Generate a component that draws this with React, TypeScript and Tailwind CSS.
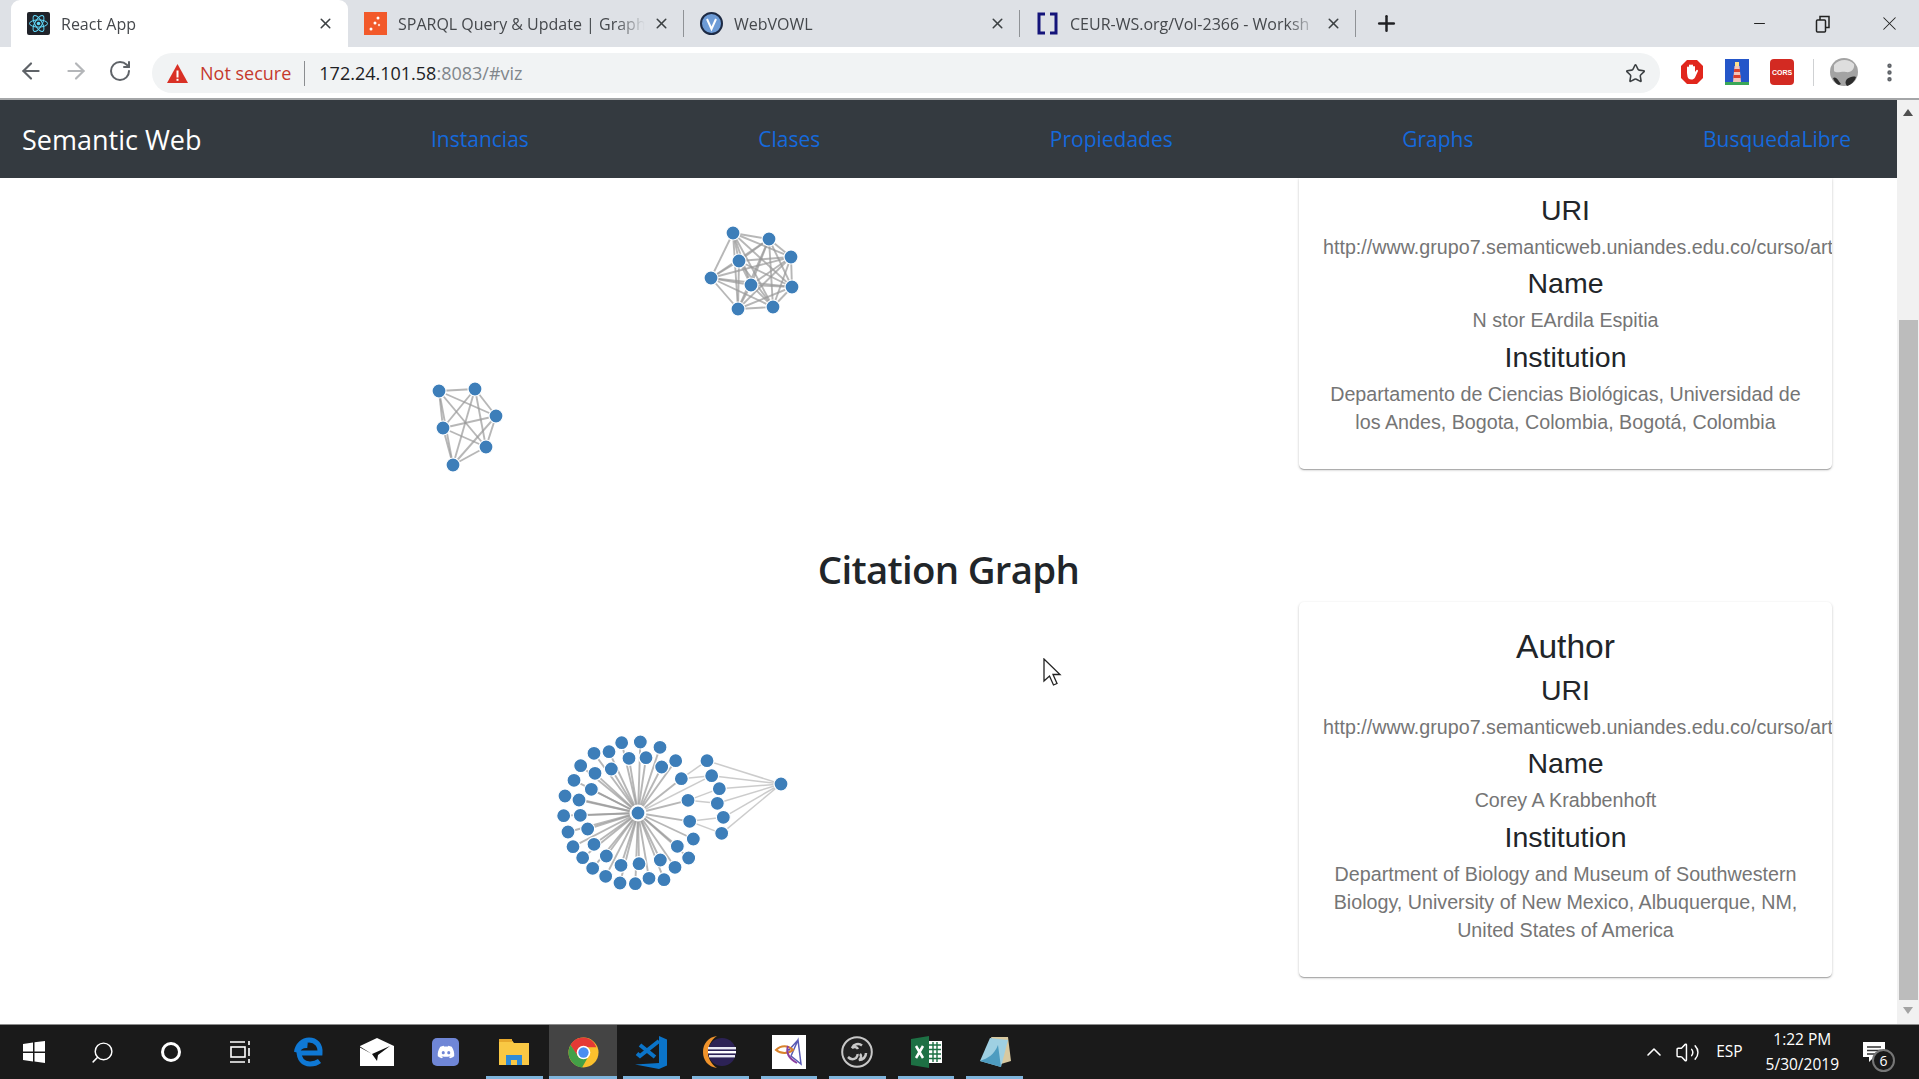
import React from 'react';
import { ArrowLeft, ArrowRight, RotateCw, Star, X, Plus, Minus, MoreVertical, ChevronUp, Volume2, Search } from 'lucide-react';
import { FaDiscord } from 'react-icons/fa';

type Point = [number, number];

// graph coordinates are in page pixels, the viewBox of each svg picks the slice it shows
const toPage = (pts: Point[], ox: number, oy: number): Point[] => pts.map(([x, y]) => [ox + x / 3, oy + y / 3]);

const clusterA: Point[] = [[733, 233], [769, 239], [791, 257], [739, 261], [711, 278], [751, 285], [792, 287], [738, 309], [773, 307]];
const clusterB: Point[] = [[439, 391], [475, 389], [496, 416], [443, 428], [486, 447], [453, 465]];

const citationCenter: Point = [638, 813];
const citationHub: Point = [781, 784];
const citationNodes = toPage(
  [
    [245, 68], [301, 66], [360, 82], [207, 95], [162, 100], [267, 115], [318, 113], [407, 122], [122, 137], [365, 141],
    [214, 147], [165, 160], [424, 176], [102, 181], [154, 208], [75, 228], [117, 240], [71, 287], [121, 286], [143, 327],
    [84, 336], [162, 373], [99, 380], [199, 408], [128, 413], [158, 445], [243, 436], [297, 431], [361, 420], [405, 442],
    [446, 414], [412, 379], [460, 357], [197, 469], [240, 489], [286, 491], [327, 475], [372, 479], [444, 241], [449, 304],
  ],
  540,
  720,
);
const citationRight = toPage([[501, 122], [515, 167], [538, 206], [532, 250], [550, 292], [545, 340]], 540, 720);
const rightLinks: [number, Point][] = toPage([[424, 176], [424, 176], [444, 241], [444, 241], [449, 304], [449, 304]], 540, 720).map((p, i) => [i, p]);

const Link = ({ a, b, light }: { a: Point; b: Point; light?: boolean }) => (
  <line x1={a[0]} y1={a[1]} x2={b[0]} y2={b[1]} stroke="#999" strokeOpacity={light ? 0.5 : 0.7} strokeWidth={light ? 1.5 : 1.9} />
);

const Node = ({ p, r = 7 }: { p: Point; r?: number }) => (
  <circle cx={p[0]} cy={p[1]} r={r} fill="#3d7eb9" stroke="#fff" strokeWidth={1.2} />
);

const Cluster = ({ nodes }: { nodes: Point[] }) => (
  <g>
    {nodes.map((a, i) => nodes.slice(i + 1).map((b, j) => <Link key={`${i}-${j}`} a={a} b={b} />))}
    {nodes.map((p, i) => <Node key={i} p={p} />)}
  </g>
);

const CitationGraph = () => (
  <g>
    {citationNodes.map((p, i) => <Link key={i} a={citationCenter} b={p} />)}
    {citationRight.map((p, i) => <Link key={i} a={citationHub} b={p} light />)}
    {rightLinks.map(([i, p]) => <Link key={i} a={citationRight[i]} b={p} light />)}
    {citationRight.slice(1, 2).map((p, i) => <Link key={i} a={citationCenter} b={p} light />)}
    <circle cx={citationCenter[0]} cy={citationCenter[1]} r={8.5} fill="#fff" />
    {citationNodes.map((p, i) => <Node key={i} p={p} />)}
    {citationRight.map((p, i) => <Node key={i} p={p} />)}
    <Node p={citationCenter} />
    <Node p={citationHub} />
  </g>
);

const Field = ({ label, children, nowrap }: { label: string; children: React.ReactNode; nowrap?: boolean }) => (
  <div>
    <h4 className="text-[28.5px] leading-[34px] mb-[6px] text-center text-[#212529]">{label}</h4>
    <p className={`text-[19.7px] leading-[28px] mb-[5.33px] text-[#757575] ${nowrap ? 'whitespace-nowrap text-left' : 'text-center'}`}>
      {children}
    </p>
  </div>
);

const AuthorCard = ({ name, institution, title, top }: { name: string; institution: string; title?: boolean; top?: boolean }) => (
  <div
    className={`w-[533px] overflow-hidden bg-white px-6 pb-[28px] shadow-[0_1px_3px_rgba(0,0,0,0.2),0_1px_1px_rgba(0,0,0,0.14),0_2px_1px_-1px_rgba(0,0,0,0.12)] ${
      top ? 'rounded-b-[5px] pt-[15px]' : 'rounded-[5px] pt-[25px]'
    }`}
  >
    {title && <h3 className="text-[33.6px] leading-[40px] mb-[6px] text-center text-[#212529]">Author</h3>}
    <Field label="URI" nowrap>http://www.grupo7.semanticweb.uniandes.edu.co/curso/art</Field>
    <Field label="Name">{name}</Field>
    <Field label="Institution">{institution}</Field>
  </div>
);

const ReactIcon = () => (
  <svg width="23" height="23" viewBox="0 0 23 23">
    <rect width="23" height="23" rx="2" fill="#20232a" />
    <g fill="none" stroke="#61dafb" strokeWidth="1">
      <ellipse cx="11.5" cy="11.5" rx="9" ry="3.6" />
      <ellipse cx="11.5" cy="11.5" rx="9" ry="3.6" transform="rotate(60 11.5 11.5)" />
      <ellipse cx="11.5" cy="11.5" rx="9" ry="3.6" transform="rotate(120 11.5 11.5)" />
    </g>
    <circle cx="11.5" cy="11.5" r="1.8" fill="#61dafb" />
  </svg>
);

const SparqlIcon = () => (
  <svg width="23" height="23" viewBox="0 0 23 23">
    <rect width="23" height="23" fill="#f2592a" />
    <circle cx="14" cy="6" r="1.5" fill="#fff" />
    <circle cx="11" cy="11" r="1.5" fill="#fff" />
    <circle cx="15" cy="13" r="1.2" fill="#ffd3c4" />
    <circle cx="7" cy="17" r="1.5" fill="#fff" />
  </svg>
);

const VowlIcon = () => (
  <svg width="23" height="23" viewBox="0 0 23 23">
    <circle cx="11.5" cy="11.5" r="10.5" fill="#6d9bd6" stroke="#1d2a44" strokeWidth="2" />
    <path d="M7 7l4.5 10L16 7" fill="none" stroke="#fff" strokeWidth="2" />
  </svg>
);

const CeurIcon = () => (
  <svg width="21" height="23" viewBox="0 0 21 23">
    <path d="M8 2H2v19h6M13 2h6v19h-6" fill="none" stroke="#14147a" strokeWidth="3" />
  </svg>
);

const Tab = ({ icon, title, active, last }: { icon: React.ReactNode; title: string; active?: boolean; last?: boolean }) => (
  <div className={`relative flex h-full items-center pl-[16px] pr-[14px] ${active ? 'ml-[4px] w-[337px] rounded-t-[9px] bg-white' : 'w-[336px]'}`}>
    <span className="flex w-[23px] shrink-0 justify-center">{icon}</span>
    <span className="ml-[11px] flex-1 overflow-hidden whitespace-nowrap text-[16px] text-[#45484c] [mask-image:linear-gradient(to_right,black_88%,transparent)]">
      {title}
    </span>
    <X size={17} strokeWidth={2.2} className="ml-2 shrink-0 text-[#3c4043]" />
    {(!active || last) && <span className="absolute right-0 top-[10px] h-[27px] w-px bg-[#8f9296]" />}
  </div>
);

const TabStrip = () => (
  <div className="flex h-[47px] shrink-0 items-end bg-[#dee1e6] pl-[7px]">
    <Tab active icon={<ReactIcon />} title="React App" />
    <Tab icon={<SparqlIcon />} title="SPARQL Query & Update | Graph" />
    <Tab icon={<VowlIcon />} title="WebVOWL" />
    <Tab last icon={<CeurIcon />} title="CEUR-WS.org/Vol-2366 - Worksh" />
    <Plus size={25} strokeWidth={2.4} className="mb-[11px] ml-[18px] text-[#202124]" />
    <div className="mb-[12px] ml-auto flex items-center gap-[47px] pr-[18px] text-[#222]">
      <Minus size={17} strokeWidth={1.6} />
      <svg width="16" height="18" viewBox="0 0 16 18" fill="none" stroke="#222" strokeWidth="1.5">
        <rect x="1.5" y="5" width="9" height="12" rx="1" />
        <path d="M5 5V1.5h9v11h-3.5" />
      </svg>
      <X size={23} strokeWidth={1.1} />
    </div>
  </div>
);

const StopIcon = () => (
  <svg width="24" height="26" viewBox="0 0 24 26">
    <path d="M7 1h10l6 6v12l-6 6H7l-6-6V7z" fill="#e1261c" />
    <path d="M7 14V8.500a1 1 0 0 1 2 0V6.500a1 1 0 0 1 2 0a1 1 0 0 1 2 0V8a1 1 0 0 1 2 0v5l1.500-2a1 1 0 0 1 1.500 1l-3 6.500c-1 1.500-2 2-3.500 2c-2.500 0-3.500-1-4-3z" fill="#fff" />
  </svg>
);

const LighthouseIcon = () => (
  <svg width="24" height="26" viewBox="0 0 24 26">
    <rect width="24" height="26" fill="#2456c9" />
    <rect y="23" width="24" height="3" fill="#3aa757" />
    <path d="M9.500 7h5l1.500 16H8z" fill="#f3c5ba" />
    <path d="M9.200 10h5.600l.3 3H8.900zM8.600 16h6.800l.3 3H8.300z" fill="#d9402e" />
    <rect x="10" y="3" width="4" height="4" fill="#ffe08a" />
  </svg>
);

const CorsIcon = () => (
  <svg width="24" height="26" viewBox="0 0 24 26">
    <rect width="24" height="26" rx="4" fill="#d32a22" />
    <text x="12" y="16" textAnchor="middle" fontFamily="Liberation Sans" fontSize="7" fontWeight="700" fill="#fff">
      CORS
    </text>
  </svg>
);

const Avatar = () => (
  <svg width="28" height="30" viewBox="0 0 28 30">
    <circle cx="14" cy="15" r="14" fill="#a3a3a3" />
    <path d="M4 8c5-6 14-7 20-1 1 5-3 9-8 8s-9 2-12-1z" fill="#dedede" />
    <path d="M3 21c3-2 5 2 8 6l-2 1c-3-1-5-4-6-7zM17 22c3-2 6-3 9-2-1 4-5 8-9 9-2-2-2-5 0-7z" fill="#2c2c2c" />
  </svg>
);

const Toolbar = () => (
  <div className="flex h-[53px] shrink-0 items-start border-b-2 border-[#a4a6a8] bg-white">
    <div className="mt-[11px] flex w-[152px] items-center pl-[18px] gap-[19px]">
      <ArrowLeft size={26} strokeWidth={2} className="text-[#5f6368]" />
      <ArrowRight size={26} strokeWidth={2} className="text-[#b4b6b9]" />
      <RotateCw size={24} strokeWidth={2} className="text-[#5f6368]" />
    </div>
    <div className="mt-[6px] flex h-[40px] w-[1508px] items-center rounded-full bg-[#f1f3f4] pl-[15px] pr-[14px]">
      <svg width="21" height="19" viewBox="0 0 21 19">
        <path d="M10.500 0L21 19H0z" fill="#d93025" />
        <rect x="9.500" y="6.500" width="2" height="7" fill="#fff" />
        <rect x="9.500" y="14.800" width="2" height="2" fill="#fff" />
      </svg>
      <span className="ml-[12px] text-[18px] text-[#c5392d]">Not secure</span>
      <span className="ml-[13px] h-[25px] w-px bg-[#8b8d90]" />
      <span className="ml-[14px] text-[18px] text-[#202124]">
        172.24.101.58<span className="text-[#80868b]">:8083/#viz</span>
      </span>
      <Star size={21} strokeWidth={1.8} className="ml-auto text-[#3c4043]" />
    </div>
    <div className="mt-[10px] flex flex-1 items-center pl-[20px]">
      <StopIcon />
      <span className="ml-[21px]"><LighthouseIcon /></span>
      <span className="ml-[21px]"><CorsIcon /></span>
      <span className="ml-[19px] h-[27px] w-px bg-[#cfd1d3]" />
      <span className="ml-[16px]"><Avatar /></span>
      <MoreVertical size={23} strokeWidth={2.6} className="ml-[20px] text-[#5f6368]" />
    </div>
  </div>
);

const Navbar = () => (
  <nav className="flex h-[78px] shrink-0 items-center justify-between bg-[#343a40] pt-[2px] pl-[22px] pr-[46px] font-['Open_Sans',sans-serif]">
    <span className="text-[27px] text-white">Semantic Web</span>
    {['Instancias', 'Clases', 'Propiedades', 'Graphs', 'BusquedaLibre'].map(item => (
      <a key={item} className="text-[21px] text-[#1569dc]">{item}</a>
    ))}
  </nav>
);

const Scrollbar = () => (
  <div className="flex w-[22px] shrink-0 flex-col items-center bg-[#f1f1f1]">
    <span className="mt-[9px] h-0 w-0 border-x-[5px] border-b-[7px] border-x-transparent border-b-[#505050]" />
    <div className="mt-[204px] h-[680px] w-[19px] bg-[#bcbcbc]" />
    <span className="mt-[7px] h-0 w-0 border-x-[5px] border-t-[7px] border-x-transparent border-t-[#a3a3a3]" />
  </div>
);

const Cursor = () => (
  <svg className="absolute left-[1043px] top-[658px]" width="19" height="28" viewBox="0 0 19 28">
    <path d="M1 1v22l5.500-5 4 9 3.500-1.500-4-9H17z" fill="#fff" stroke="#222" strokeWidth="1.3" />
  </svg>
);

const ChromeIcon = () => (
  <svg width="31" height="31" viewBox="0 0 32 32">
    <circle cx="16" cy="16" r="15.500" fill="#fbc02d" />
    <path d="M16 .5A15.500 15.500 0 0 0 2.600 8.200L9 19l7-8.500h13.400A15.500 15.500 0 0 0 16 .5z" fill="#e53935" />
    <path d="M2.600 8.200A15.500 15.500 0 0 0 14.500 31.400L20 22l-9-1z" fill="#43a047" />
    <circle cx="16" cy="16" r="7" fill="#fff" />
    <circle cx="16" cy="16" r="5.300" fill="#4a8df0" />
  </svg>
);

const TaskIcons: { key: string; icon: React.ReactNode; open?: boolean; active?: boolean }[] = [
  {
    key: 'start',
    icon: (
      <svg width="24" height="24" viewBox="0 0 24 24" fill="#fff">
        <path d="M1 4l10-1.500V11.500H1zM12.500 2.300L23 1v10.500H12.500zM1 13h10v8.500L1 20zM12.500 13H23v10l-10.500-1.500z" />
      </svg>
    ),
  },
  { key: 'search', icon: <Search size={25} strokeWidth={1.4} className="-scale-x-100 text-white" /> },
  { key: 'cortana', icon: <span className="h-[20px] w-[20px] rounded-full border-[3px] border-white" /> },
  {
    key: 'taskview',
    icon: (
      <svg width="24" height="26" viewBox="0 0 24 26" fill="none" stroke="#fff" strokeWidth="1.6">
        <rect x="3" y="8" width="14" height="10" />
        <path d="M2 3h15M2 23h15M21 2v4M21 9v8M21 20v4" />
      </svg>
    ),
  },
  {
    key: 'edge',
    icon: (
      <svg width="30" height="32" viewBox="0 0 30 32" fill="none">
        <path d="M4 17h22c.5-8-4-13-11-13C9 4 3.500 9 2.500 16c2-4 6-7 11-6.500" stroke="#0f78d4" strokeWidth="5" />
        <path d="M5 15c0 8 4 13 11 13 4 0 7-1 9.500-3" stroke="#0f78d4" strokeWidth="5" />
      </svg>
    ),
  },
  {
    key: 'mail',
    icon: (
      <svg width="34" height="28" viewBox="0 0 34 28">
        <path d="M0 8L17 0l17 8v20H0z" fill="#fff" />
        <path d="M0 8.500l12 7.500 18-8-12 9-1 6-5-7L0 9.500z" fill="#111" />
      </svg>
    ),
  },
  {
    key: 'discord',
    icon: (
      <span className="flex h-[28px] w-[27px] items-center justify-center rounded-[5px] bg-[#6f86d6]">
        <FaDiscord size={18} className="text-white" />
      </span>
    ),
  },
  {
    key: 'explorer',
    open: true,
    icon: (
      <svg width="32" height="28" viewBox="0 0 32 28">
        <path d="M1 1h12l3 4h15v22H1z" fill="#f9c844" />
        <rect x="1" y="1" width="13" height="3" fill="#e8a92c" />
        <path d="M8 27V17h16v10h-5v-5h-6v5z" fill="#2e8bd8" />
      </svg>
    ),
  },
  { key: 'chrome', open: true, active: true, icon: <ChromeIcon /> },
  {
    key: 'vscode',
    open: true,
    icon: (
      <svg width="35" height="35" viewBox="0 0 35 35" fill="none">
        <path d="M25 1l8 3.500v26L25 34 1 29.500 25 28z" fill="#0b74c9" />
        <path d="M25 6L6 21l-3-2.500M6 10l15 12" stroke="#0b74c9" strokeWidth="4" />
      </svg>
    ),
  },
  {
    key: 'eclipse',
    open: true,
    icon: (
      <svg width="34" height="32" viewBox="0 0 34 32">
        <path d="M14 0C5 1 0 8 0 16s5 15 14 16C8 28 5 22 5 16S8 4 14 0z" fill="#f0932b" />
        <circle cx="19" cy="16" r="14" fill="#2c2255" />
        <rect x="5" y="11" width="28" height="2.400" fill="#e8e8f4" />
        <rect x="5" y="15" width="28" height="2.400" fill="#fff" />
        <rect x="6" y="19" width="26" height="2.400" fill="#e8e8f4" />
      </svg>
    ),
  },
  {
    key: 'protege',
    open: true,
    icon: (
      <svg width="34" height="34" viewBox="0 0 34 34">
        <rect width="34" height="34" fill="#fff" />
        <path d="M26 5l-9 10-2-1M26 5l3 24-10-8z" fill="none" stroke="#5a5bb5" strokeWidth="1.500" />
        <path d="M4 15c5-5 12-5 17 0-5 4-12 4-17 0z" fill="none" stroke="#d9822b" strokeWidth="2" />
        <path d="M16 11c-2 6 0 12 9 17" fill="none" stroke="#8a3fa0" strokeWidth="2" />
      </svg>
    ),
  },
  {
    key: 'obs',
    open: true,
    icon: (
      <svg width="32" height="32" viewBox="0 0 32 32" fill="none">
        <circle cx="16" cy="16" r="14.800" fill="#222" stroke="#c8c8c8" strokeWidth="2" />
        <path d="M21 9.500a6.500 6.500 0 0 0-10 2.500c2-2 5-1 6 1M7 21c2 2 5 3 8 1 1-1 2-2 1.500-4M25 17c0 4-3 7-7 7 2-1 3-4 1-6" stroke="#c8c8c8" strokeWidth="2.500" />
      </svg>
    ),
  },
  {
    key: 'excel',
    open: true,
    icon: (
      <svg width="31" height="32" viewBox="0 0 31 32">
        <rect x="12" y="5" width="19" height="22" fill="#fff" />
        <path d="M17 9h13M17 13.500h13M17 18h13M17 22.500h13M22 6v20M26 6v20" stroke="#1d7044" strokeWidth="1.400" />
        <path d="M0 3l18-3v32L0 29z" fill="#1d7044" />
        <path d="M5 10l7 12M12 10L5 22" stroke="#fff" strokeWidth="2.500" />
      </svg>
    ),
  },
  {
    key: 'notes',
    open: true,
    icon: (
      <svg width="32" height="32" viewBox="0 0 32 32">
        <path d="M12 1h17l3 24-10 3z" fill="#d8c9a0" />
        <path d="M11 2l18 2-7 27L1 25z" fill="#9fd0e2" />
        <path d="M1 25c8-3 14-6 18-16l3 22z" fill="#4d9cc0" />
      </svg>
    ),
  },
];

const Taskbar = () => (
  <div className="flex h-[55px] shrink-0 items-stretch border-t border-[#8c8c8c] bg-[#1a1a1a]">
    {TaskIcons.map(item => (
      <div key={item.key} className={`relative flex w-[68.6px] items-center justify-center ${item.active ? 'bg-[#444444]' : ''}`}>
        {item.icon}
        {item.open && <span className={`absolute bottom-0 h-[3px] bg-[#7fb4dc] ${item.active ? 'inset-x-0' : 'inset-x-[6px]'}`} />}
      </div>
    ))}
    <div className="ml-auto flex items-center text-white font-['Open_Sans',sans-serif]">
      <ChevronUp size={24} strokeWidth={1.6} />
      <Volume2 size={25} strokeWidth={1.4} className="ml-[9px]" />
      <span className="ml-[16px] text-[15.5px]">ESP</span>
      <div className="ml-[23px] flex flex-col items-center text-[15.5px] leading-[25px]">
        <span>1:22 PM</span>
        <span>5/30/2019</span>
      </div>
      <div className="relative ml-[23px] mr-[33px]">
        <svg width="24" height="24" viewBox="0 0 24 24">
          <path d="M1 2h22v15H12l-5 5v-5H1z" fill="#fff" />
          <path d="M5 7h14M5 10.500h14M5 14h9" stroke="#333" strokeWidth="1.400" />
        </svg>
        <span className="absolute -right-[9px] top-[9px] flex h-[23px] w-[23px] items-center justify-center rounded-full border-2 border-[#777] bg-[#1a1a1a] text-[14px] leading-none">6</span>
      </div>
    </div>
  </div>
);

export default function App() {
  return (
    <div className="relative flex h-screen w-full flex-col overflow-hidden bg-white font-['Liberation_Sans',sans-serif]">
      <div className="font-['Open_Sans',sans-serif]">
        <TabStrip />
      </div>
      <div className="font-['Open_Sans',sans-serif]">
        <Toolbar />
      </div>
      <div className="flex min-h-0 flex-1">
        <div className="flex min-w-0 flex-1 flex-col overflow-hidden">
          <Navbar />
          {/* knowledge graph + its card */}
          <div className="flex items-start">
            <svg className="h-[291px] w-[1299px] shrink-0 overflow-visible" viewBox="0 178 1299 291">
              <Cluster nodes={clusterA} />
              <Cluster nodes={clusterB} />
            </svg>
            <AuthorCard
              top
              name="N stor EArdila Espitia"
              institution="Departamento de Ciencias Biológicas, Universidad de los Andes, Bogota, Colombia, Bogotá, Colombia"
            />
          </div>

          <h2 className="mt-[74px] mb-[7px] text-center font-['Open_Sans',sans-serif] text-[38.4px] font-semibold leading-[52px] tracking-[-0.7px] text-[#212529]">
            Citation Graph
          </h2>

          <div className="flex items-start">
            <svg className="h-[376px] w-[1299px] shrink-0 overflow-visible" viewBox="0 602 1299 376">
              <CitationGraph />
            </svg>
            <AuthorCard
              title
              name="Corey A Krabbenhoft"
              institution="Department of Biology and Museum of Southwestern Biology, University of New Mexico, Albuquerque, NM, United States of America"
            />
          </div>
        </div>
        <Scrollbar />
      </div>
      <Taskbar />
      <Cursor />
    </div>
  );
}
